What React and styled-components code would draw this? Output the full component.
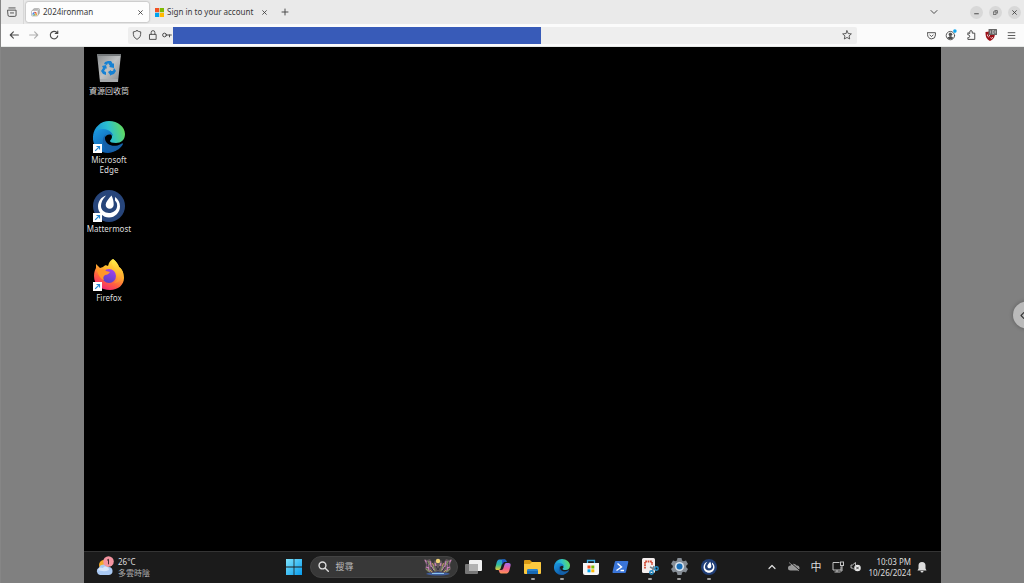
import React from "react";
import styled, { createGlobalStyle } from "styled-components";

const GlobalStyle = createGlobalStyle`
  *, *::before, *::after { box-sizing: border-box; }
  html, body { margin: 0; padding: 0; }
  body { font-family: "Noto Sans", "Noto Sans CJK TC", sans-serif; font-size: 8px; color: #383838; overflow: hidden; }
  button, input { font: inherit; color: inherit; border: 0; padding: 0; margin: 0; background: none; }
  svg { display: block; flex: none; }
`;

/* ---------- Browser chrome ---------- */

const Window = styled.div`
  display: flex;
  flex-direction: column;
  min-height: 100vh;
  border-left: 1px solid #868686;
`;

const TabStrip = styled.header`
  display: flex;
  align-items: center;
  height: 24px;
  background: #eaeaea;
`;

const IconButton = styled.button`
  display: flex;
  align-items: center;
  justify-content: center;
  flex: none;
  width: ${(p) => p.$w || 20}px;
  height: 20px;
  color: ${(p) => p.$color || "#4c4c4c"};
`;

const Divider = styled.span`
  width: 1px;
  height: 24px;
  margin-right: 2px;
  background: #d8d8d8;
`;

const Tabs = styled.div`
  display: flex;
  gap: 1px;
`;

const Tab = styled.div`
  display: flex;
  align-items: center;
  width: 123px;
  height: 20px;
  padding: 0 4px 0 5px;
  gap: 3px;
  border-radius: 2px;
  background: ${(p) => (p.$active ? "#fdfdfd" : "transparent")};
  box-shadow: ${(p) => (p.$active ? "0 0 2px rgba(0, 0, 0, 0.45)" : "none")};
`;

const TabTitle = styled.span`
  flex: 1;
  line-height: 12px;
  white-space: nowrap;
`;

const CloseButton = styled.button`
  display: flex;
  align-items: center;
  justify-content: center;
  width: 10px;
  height: 12px;
`;

const Spacer = styled.span`
  flex: 1;
`;

const WindowControls = styled.div`
  display: flex;
  gap: 6px;
  padding: 0 3px 0 26px;
`;

const RoundButton = styled.button`
  display: flex;
  align-items: center;
  justify-content: center;
  width: 13px;
  height: 13px;
  border-radius: 50%;
  background: #d8d8d8;
`;

const Toolbar = styled.nav`
  display: flex;
  align-items: center;
  height: 23px;
  padding-left: 3px;
  background: #fbfbfb;
  border-bottom: 1px solid #e6e9e7;
`;

const AddressBar = styled.div`
  display: flex;
  align-items: center;
  flex: 1;
  height: 17px;
  margin-left: 64px;
  padding-left: 1px;
  border-radius: 2px;
  background: #eeeeee;
`;

const AddressInput = styled.input`
  width: 368px;
  height: 17px;
  background: #385bb8;
  color: #fff;
`;

const ToolbarActions = styled.div`
  display: flex;
  padding: 0 3px 0 64px;
`;

/* ---------- Remote session ---------- */

const Session = styled.main`
  position: relative;
  display: flex;
  flex: 1;
  padding: 0 83px;
  overflow: hidden;
  background: #808080;
`;

const DrawerHandle = styled.button`
  position: absolute;
  top: 50%;
  right: -16px;
  display: flex;
  align-items: center;
  width: 27px;
  height: 27px;
  padding-left: 7px;
  border-radius: 50%;
  transform: translateY(-50%);
  background: #bababa;
  box-shadow: 0 0 4px rgba(0, 0, 0, 0.3);
`;

const Desktop = styled.section`
  display: flex;
  flex-direction: column;
  flex: 1;
  background: #000;
  color: #dedede;
`;

const Shortcuts = styled.div`
  display: flex;
  flex-direction: column;
  flex: 1;
  width: 50px;
`;

const Shortcut = styled.button`
  display: flex;
  flex-direction: column;
  align-items: center;
  height: 69px;
  padding-top: 4px;
  line-height: 10px;
`;

const ShortcutArt = styled.span`
  position: relative;
  display: flex;
  align-items: center;
  justify-content: center;
  width: 34px;
  height: 34px;
  margin-bottom: 1px;
`;

const ShortcutArrow = styled.span`
  position: absolute;
  left: 1px;
  bottom: 1px;
`;

const Taskbar = styled.footer`
  display: grid;
  grid-template-columns: 195fr auto 217fr;
  align-items: center;
  height: 32px;
  padding-bottom: 2px;
  background: #1b1b1b;
  border-top: 1px solid #343434;
`;

const Weather = styled.button`
  display: flex;
  align-items: center;
  justify-self: start;
  gap: 3px;
  padding-left: 11px;
  line-height: 11px;
  text-align: left;
`;

const Muted = styled.span`
  display: block;
  color: #b0b0b0;
`;

const Pinned = styled.div`
  display: flex;
  align-items: center;
`;

const SearchBox = styled.label`
  display: flex;
  align-items: center;
  width: 148px;
  height: 22px;
  margin: 0 1px;
  padding: 0 4px 0 7px;
  gap: 6px;
  border: 1px solid #434343;
  border-radius: 11px;
  background: #383838;
`;

const SearchInput = styled.input`
  flex: 1;
  min-width: 0;
  font-size: 9px;
  &::placeholder { color: #bcbcbc; opacity: 1; }
`;

const Apps = styled.div`
  display: flex;
  width: 264px;
`;

const AppButton = styled.button`
  position: relative;
  display: flex;
  align-items: center;
  justify-content: center;
  flex: ${(p) => (p.$fixed ? "none" : 1)};
  width: 30px;
  height: 28px;
  &::after {
    content: "";
    position: absolute;
    bottom: 1px;
    width: 4px;
    height: 2px;
    border-radius: 1px;
    background: ${(p) => (p.$running ? "#a0a0a0" : "transparent")};
  }
`;

const Tray = styled.div`
  display: flex;
  align-items: center;
  justify-self: end;
  padding-right: 8px;
`;

const TrayButton = styled.button`
  display: flex;
  align-items: center;
  justify-content: center;
  width: ${(p) => p.$w || 22}px;
  height: 22px;
  font-size: 11px;
  line-height: 22px;
`;

const Clock = styled.time`
  width: 50px;
  line-height: 11px;
  text-align: right;
  white-space: nowrap;
`;

/* ---------- Icons ---------- */

const Line = ({ size = 10, box = 16, w = 1.5, children, ...rest }) => (
  <svg width={size} height={size} viewBox={`0 0 ${box} ${box}`} fill="none" stroke="currentColor"
    strokeWidth={w} strokeLinecap="round" strokeLinejoin="round" aria-hidden="true" {...rest}>
    {children}
  </svg>
);

const Cross = ({ size = 5 }) => (
  <Line size={size} w={2.6}><path d="M2 2l12 12M14 2L2 14" /></Line>
);

const MicrosoftLogo = () => (
  <svg width="9" height="9" viewBox="0 0 9 9" aria-hidden="true">
    <path fill="#f25022" d="M0 0h4.2v4.2H0z" />
    <path fill="#7fba00" d="M4.8 0H9v4.2H4.8z" />
    <path fill="#00a4ef" d="M0 4.8h4.2V9H0z" />
    <path fill="#ffb900" d="M4.8 4.8H9V9H4.8z" />
  </svg>
);

const SessionFavicon = () => (
  <svg width="9" height="9" viewBox="0 0 18 18" aria-hidden="true">
    <rect x="5" y="1" width="12" height="11" rx="2" fill="#ddd" stroke="#888" />
    <rect x="3" y="3" width="12" height="11" rx="2" fill="#eee" stroke="#888" />
    <rect x="1" y="5" width="13" height="11" rx="2" fill="#fff" stroke="#888" />
    <path d="M3 14a5 5 0 014-6v4z" fill="#4b86e8" />
    <path d="M6 8a5 5 0 016 3H8z" fill="#dd5144" />
    <path d="M8 11h4v4H9z" fill="#e9a43b" />
    <path d="M3 15l4-3 2 3z" fill="#4ba05c" />
  </svg>
);

const EdgeLogo = ({ size, id }) => (
  <svg width={size} height={size} viewBox="0 0 32 32" aria-hidden="true">
    <defs>
      <linearGradient id={`${id}a`} x1="0" y1="0.5" x2="1" y2="0.3">
        <stop offset="0" stopColor="#168edb" />
        <stop offset="0.5" stopColor="#2cc0cf" />
        <stop offset="1" stopColor="#66dd55" />
      </linearGradient>
      <linearGradient id={`${id}b`} x1="0" y1="0" x2="0.7" y2="1">
        <stop offset="0" stopColor="#1d9ce4" />
        <stop offset="1" stopColor="#0b55a5" />
      </linearGradient>
    </defs>
    <path fill={`url(#${id}a)`} d="M0 15C1 6 8 0 16 0c9 0 16 6 16 13 0 6-4 9-9 9-4 0-6-1-6-2 0-1 2-2 2-4 0-4-5-7-10-6-5 0-8 2-9 5z" />
    <path fill={`url(#${id}b)`} d="M0 15c1-4 5-7 10-7 6 0 10 4 10 7-3-3-8-1-9 3-1 7 5 12 12 11-3 2-5 3-8 3C6 32-1 25 0 15z" />
    <path fill="#1560a8" d="M13 13c-6 5-3 16 6 18 5-1 9-4 11-8 0-1-1-1-2 0-7 4-15 1-16-5 0-2 0-3 1-5z" />
  </svg>
);

const MattermostLogo = ({ size, light }) => (
  <svg width={size} height={size} viewBox="0 0 32 32" aria-hidden="true">
    <circle cx="16" cy="16" r="16" fill={light ? "#213f78" : "#27457a"} />
    <path fill="#fff" d="M13 5.5C8 7 5 11.5 5 16.5 5 22.500 10 27.500 16 27.500S27 22.500 27 16.500c0-4-2-7.500-5-9.500v3.500c2 2 2.500 4 2 6.500-.6 3.500-4 6-8 6-4.500 0-8-3-8-7 0-3.500 1.500-7 5-10.500z" />
    <path fill="#fff" d="M18.500 5.500c1.500 3 2.200 6 2.200 9 0 2.500-1.700 4.200-4 4.200s-4.200-1.700-4-4.200c.2-2.500 2.600-5.500 5.800-9z" />
  </svg>
);

const FirefoxLogo = () => (
  <svg width="32" height="32" viewBox="0 0 32 32" aria-hidden="true">
    <defs>
      <linearGradient id="foxBody" x1="0.8" y1="0" x2="0.3" y2="1">
        <stop offset="0" stopColor="#fff04a" />
        <stop offset="0.4" stopColor="#ffb62c" />
        <stop offset="0.7" stopColor="#ff6040" />
        <stop offset="1" stopColor="#f32177" />
      </linearGradient>
      <linearGradient id="foxTail" x1="0.5" y1="0" x2="0.5" y2="1">
        <stop offset="0" stopColor="#fff04a" />
        <stop offset="0.5" stopColor="#ffc233" />
        <stop offset="1" stopColor="#ff8a35" />
      </linearGradient>
      <linearGradient id="foxGlobe" x1="0.7" y1="0" x2="0.3" y2="1">
        <stop offset="0" stopColor="#a442ee" />
        <stop offset="1" stopColor="#5440c4" />
      </linearGradient>
    </defs>
    <path fill="url(#foxBody)" d="M20 0c3 2 5 5 6 8 4 3 5 7 5 11 0 7-6 12-14 12C8 31 1 26 1 17c0-4 1-6 2-8V5l4 4 3-1c2-2 3-2 5-1l1-3c1-2 2-3 4-4z" />
    <circle cx="16" cy="17" r="7" fill="url(#foxGlobe)" />
    <path fill="#ff9628" d="M3 9l4 2c3-1 5-1 6 1l4 1c-1 2-3 3-5 3-2 2-2 3-1 5-4-1-6-6-8-12z" />
    <path fill="url(#foxTail)" d="M20 0c-3 5 1 8 4 12 3 5 1 10-3 12 5 0 9-4 9-9 0-3-2-6-4-7-1-3-3-6-6-8z" />
  </svg>
);

const RecycleBin = () => (
  <svg width="26" height="30" viewBox="0 0 26 30" aria-hidden="true">
    <defs>
      <linearGradient id="bin" x1="0" y1="0" x2="1" y2="1">
        <stop offset="0" stopColor="#888c8e" />
        <stop offset="0.5" stopColor="#bfc1c2" />
        <stop offset="1" stopColor="#85898c" />
      </linearGradient>
    </defs>
    <path fill="url(#bin)" d="M1 1h24l-3 28H4z" />
    <path fill="#74787a" d="M1 1h24v2H1z" />
    <path fill="#a7aaac" d="M4 26h18v3H4z" />
    <g fill="#1681d3">
      <path d="M9 9l3-1h3l2 3 1-1v5l-5-1 1-1-2-3-1 2-3-1z" />
      <path d="M6 13l4-1 1 4-1-1-2 3 2 1v3l-3-1-2-3 2-3z" />
      <path d="M12 19l3-2v1h2l1-3 2 3-2 3-3 1v1z" />
    </g>
  </svg>
);

const LinkArrow = () => (
  <svg width="9" height="9" viewBox="0 0 9 9" aria-hidden="true">
    <path fill="#fff" d="M0 0h9v9H0z" />
    <path fill="none" stroke="#2187d5" strokeWidth="1.2" d="M2.200 6.800L6.200 2.800M3.500 2.500h3v3" />
  </svg>
);

const WeatherIcon = () => (
  <svg width="20" height="22" viewBox="0 0 20 22" aria-hidden="true">
    <circle cx="9" cy="9" r="5" fill="#f3a928" />
    <path fill="#a9c9f3" d="M5 19a4 4 0 01-1-7.500A5 5 0 0113 11a4 4 0 011 8z" />
    <path fill="#d7e6fa" d="M3 14c1-3 3-3 5-2 2-3 6-1 6 2-4 2-8 1-11 0z" />
    <circle cx="13.500" cy="5.500" r="5.300" fill="#f494a0" />
    <path fill="none" stroke="#412a30" d="M12 4.300l1.500-1v5" />
  </svg>
);

const WindowsLogo = () => (
  <svg width="16" height="16" viewBox="0 0 16 16" aria-hidden="true">
    <defs>
      <linearGradient id="win" gradientUnits="userSpaceOnUse" x1="0" y1="0" x2="16" y2="16">
        <stop offset="0" stopColor="#7ee3fc" />
        <stop offset="1" stopColor="#079ced" />
      </linearGradient>
    </defs>
    <path fill="url(#win)" d="M0 0h7.600v7.600H0zM8.400 0H16v7.600H8.400zM0 8.400h7.600V16H0zM8.400 8.400H16V16H8.400z" />
  </svg>
);

const Butterflies = () => (
  <svg width="30" height="18" viewBox="0 0 30 18" aria-hidden="true">
    <path fill="#3e5c9c" d="M3 16c4-3 20-3 24 0-6 2-18 2-24 0z" />
    <path fill="#8cc4ee" d="M9 15h12v1H9z" />
    <path fill="#665a5e" d="M1 1l3 1 3-1 3 5 2-4 3 4 3-4 2 4 3-5 3 1 3-1-2 6 1 4-3 3-5 1-5-2-5 2-5-1-3-3 1-4z" />
    <path fill="none" stroke="#c682b8" strokeWidth="1.200" d="M2 2l3 5 1 6M28 2l-3 5-1 6M7 3l1 5 3 4M23 3l-1 5-3 4M3 9l3 1M27 9l-3 1M12 5l1 3M18 5l-1 3" />
    <path fill="none" stroke="#87a35f" d="M5 3l2 4M25 3l-2 4M10 8l2 5M20 8l-2 5M3 11l4 3M27 11l-4 3" />
    <path fill="none" stroke="#292a35" strokeWidth="0.800" d="M8 9l3 5M22 9l-3 5M13 8l2 4 2-4M4 4l1 5M26 4l-1 5" />
    <path fill="none" stroke="#ddb05b" strokeWidth="0.800" d="M9 5l2 3M21 5l-2 3M7 12l2 2M23 12l-2 2" />
    <circle cx="15" cy="3" r="2.200" fill="#f5d679" />
  </svg>
);

const TaskView = () => (
  <svg width="18" height="16" viewBox="0 0 18 16" aria-hidden="true">
    <rect x="4" y="1" width="13" height="11" rx="1" fill="#f1f1f1" />
    <rect x="0" y="5" width="13" height="10" rx="1" fill="#777" />
    <path fill="#b2b2b2" d="M4 5h9v7H4z" />
  </svg>
);

const Copilot = () => (
  <svg width="16" height="15" viewBox="0 0 18 16" aria-hidden="true">
    <defs>
      <linearGradient id="copA" x1="0" y1="0" x2="0" y2="1">
        <stop offset="0" stopColor="#2792e7" />
        <stop offset="0.500" stopColor="#31bd9d" />
        <stop offset="1" stopColor="#e9cf35" />
      </linearGradient>
      <linearGradient id="copB" x1="0.500" y1="0" x2="0.400" y2="1">
        <stop offset="0" stopColor="#a56df0" />
        <stop offset="0.500" stopColor="#ef5d91" />
        <stop offset="1" stopColor="#ff9454" />
      </linearGradient>
    </defs>
    <path fill="url(#copA)" d="M5 0h6c1 0 2 1 2 3H10C8 3 8 5 7 8s-1 4-3 4H2c-2 0-2-2-1-5l1-4c1-2 1-3 3-3z" />
    <path fill="#1e5bc9" d="M8 0h3c1 0 2 1 2 3h-3L8 6z" />
    <path fill="url(#copB)" d="M13 4h2c3 0 3 2 2 5l-1 4c-1 2-2 3-4 3H7c-2 0-2-2-3-4h3c2 0 2-1 3-4s1-4 3-4z" />
  </svg>
);

const Folder = () => (
  <svg width="17" height="16" viewBox="0 0 17 16" aria-hidden="true">
    <path fill="#d99a15" d="M0 2q0-1 1-1h5l2 2h8q1 0 1 1v6H0z" />
    <path fill="#fbc93f" d="M0 5h6l2-2h8q1 0 1 1v10q0 1-1 1H1q-1 0-1-1z" />
    <path fill="#1769b4" d="M3 15v-3q0-2 2-2h7q2 0 2 2v3z" />
    <path fill="#2a84cf" d="M5 10h7q2 0 2 2H3q0-2 2-2z" />
  </svg>
);

const Store = () => (
  <svg width="16" height="16" viewBox="0 0 16 16" aria-hidden="true">
    <path fill="none" stroke="#3baee7" strokeWidth="1.300" d="M4.500 5V1.500h7V5" />
    <path fill="#f6f6f6" d="M0 4h16v10q0 2-2 2H2q-2 0-2-2z" />
    <path fill="#f25022" d="M4.500 6.500h3v3h-3z" />
    <path fill="#7fba00" d="M8.300 6.500h3v3h-3z" />
    <path fill="#00a4ef" d="M4.500 10.300h3v3h-3z" />
    <path fill="#ffb900" d="M8.300 10.300h3v3h-3z" />
  </svg>
);

const PowerShell = () => (
  <svg width="17" height="14" viewBox="0 0 17 14" aria-hidden="true">
    <path fill="#3a75d8" d="M4 1h11.500q1 0 .8 1l-2.300 10q-.2 1-1.200 1H1.300q-1 0-.8-1L2.800 2Q3 1 4 1z" />
    <path fill="none" stroke="#fff" strokeWidth="1.400" d="M5.500 3.500l4 3.500-5 3.500M8.500 10.500h3.500" />
  </svg>
);

const Snipping = () => (
  <svg width="18" height="17" viewBox="0 0 18 17" aria-hidden="true">
    <rect x="1" y="0" width="13" height="15" rx="1.500" fill="#f4eeee" />
    <path fill="none" stroke="#d24c37" strokeWidth="1.800" strokeDasharray="1.800 0.600" d="M4 10.500V3.500h7V7" />
    <path stroke="#77838c" strokeWidth="1.500" d="M9 9l6 3M13 8l-2 6" />
    <g fill="none" stroke="#238ec9" strokeWidth="1.500">
      <circle cx="15.500" cy="10.500" r="1.700" />
      <circle cx="10.500" cy="14.500" r="1.700" />
    </g>
  </svg>
);

const Gear = () => (
  <svg width="17" height="17" viewBox="0 0 17 17" aria-hidden="true">
    <path fill="#858c94" d="M6.500 0h4l.6 2.400 1.500.9 2.400-.7 2 3.400-1.800 1.700v1.600L17 11l-2 3.400-2.400-.7-1.500.9-.6 2.400h-4l-.6-2.400-1.500-.9-2.400.7L0 11l1.800-1.700V7.700L0 6l2-3.400 2.400.7 1.500-.9z" />
    <circle cx="8.500" cy="8.500" r="4.600" fill="#d9e3ec" />
    <circle cx="8.500" cy="8.500" r="3" fill="#176db7" />
  </svg>
);

const CloudOff = () => (
  <svg width="12" height="10" viewBox="0 0 24 20" aria-hidden="true">
    <path fill="#999" d="M5 17a5 5 0 010-10 7 7 0 0112 0 5 5 0 012 10z" />
    <path stroke="#1b1b1b" strokeWidth="2" d="M4 0l19 17" />
    <path stroke="#aaa" strokeWidth="1.500" d="M2 1l20 17" />
  </svg>
);

const Network = () => (
  <svg width="12" height="12" viewBox="0 0 24 24" fill="none" stroke="#c4c4c4" strokeWidth="2" aria-hidden="true">
    <path d="M15 3H2v15h16v-7M10 18v4M5 22h12M20 9v11h-3" />
    <rect x="17" y="2" width="6" height="7" />
  </svg>
);

const Muting = () => (
  <svg width="11" height="11" viewBox="0 0 22 22" aria-hidden="true">
    <path fill="none" stroke="#ccc" strokeWidth="1.700" d="M2 8h3l6-5v6M2 8v6h3l3 3" />
    <circle cx="15" cy="14" r="6.500" fill="#e8e8e8" />
    <path stroke="#222" strokeWidth="1.600" d="M12.500 11.500l5 5M17.500 11.500l-5 5" />
  </svg>
);

const Bell = () => (
  <svg width="10" height="12" viewBox="0 0 20 24" aria-hidden="true">
    <path fill="#dcdcdc" d="M10 2a7 7 0 00-7 7v6l-2 4h18l-2-4V9a7 7 0 00-7-7zM7 20a3 3 0 006 0z" />
  </svg>
);

const Account = () => (
  <Line size={12} box={20} w={1.5}>
    <circle cx="9" cy="11" r="7" />
    <circle cx="9" cy="9" r="2.300" fill="currentColor" />
    <path fill="currentColor" d="M5 15q4-5 8 0-4 3-8 0z" />
    <circle cx="16.500" cy="3.500" r="3" fill="#12a7ee" stroke="none" />
  </Line>
);

const Blocker = () => (
  <svg width="12" height="13" viewBox="0 0 24 26" aria-hidden="true">
    <path fill="#9c1018" d="M1 6q5 0 9-2 4 2 10 2c0 10-2 14-10 18C3 20 1 16 1 6z" />
    <path fill="none" stroke="#fff" strokeWidth="1.500" d="M5 11v3q2 3 4 0v-2M11 17a2 2 0 104-1" />
    <rect x="7" y="0" width="17" height="12" rx="1" fill="#666" />
    <path fill="none" stroke="#ccc" strokeWidth="1.300" d="M11 3v6M15 3v6h3V3zM21 3v6" />
  </svg>
);

/* ---------- Data ---------- */

const shortcuts = [
  { label: "資源回收筒", art: <RecycleBin /> },
  { label: "Microsoft Edge", art: <EdgeLogo size={32} id="deskEdge" />, link: true },
  { label: "Mattermost", art: <MattermostLogo size={32} />, link: true },
  { label: "Firefox", art: <FirefoxLogo />, link: true },
];

const apps = [
  { name: "Task view", icon: <TaskView /> },
  { name: "Copilot", icon: <Copilot /> },
  { name: "File Explorer", icon: <Folder />, running: true },
  { name: "Microsoft Edge", icon: <EdgeLogo size={16} id="barEdge" />, running: true },
  { name: "Microsoft Store", icon: <Store /> },
  { name: "PowerShell", icon: <PowerShell /> },
  { name: "Snipping Tool", icon: <Snipping />, running: true },
  { name: "Settings", icon: <Gear />, running: true },
  { name: "Mattermost", icon: <MattermostLogo size={16} light />, running: true },
];

export default function App() {
  return (
    <Window>
      <GlobalStyle />
      <TabStrip>
        <IconButton $w={22} aria-label="Firefox View">
          <Line w={1.5}><path d="M3 1.500h10M1.500 5h13v8q0 2-2 2h-9q-2 0-2-2zM5.500 9.500h5" /></Line>
        </IconButton>
        <Divider />
        <Tabs>
          <Tab $active>
            <SessionFavicon />
            <TabTitle>2024ironman</TabTitle>
            <CloseButton aria-label="Close tab"><Cross /></CloseButton>
          </Tab>
          <Tab>
            <MicrosoftLogo />
            <TabTitle>Sign in to your account</TabTitle>
            <CloseButton aria-label="Close tab"><Cross /></CloseButton>
          </Tab>
        </Tabs>
        <IconButton $w={24} aria-label="New tab">
          <Line size={8} w={2}><path d="M8 2v12M2 8h12" /></Line>
        </IconButton>
        <Spacer />
        <IconButton aria-label="List all tabs">
          <Line size={8} w={2}><path d="M2 5l6 6 6-6" /></Line>
        </IconButton>
        <WindowControls>
          <RoundButton aria-label="Minimize"><Line size={5} w={2.8}><path d="M2 12h12" /></Line></RoundButton>
          <RoundButton aria-label="Restore"><Line size={5} w={2.2}><path d="M2 6h8v8H2zM6 2h8v8" /></Line></RoundButton>
          <RoundButton aria-label="Close"><Cross /></RoundButton>
        </WindowControls>
      </TabStrip>

      <Toolbar>
        <IconButton aria-label="Back"><Line w={1.8}><path d="M15 8H2M7 3L2 8l5 5" /></Line></IconButton>
        <IconButton $color="#b0b0b0" aria-label="Forward"><Line w={1.8}><path d="M1 8h13M9 3l5 5-5 5" /></Line></IconButton>
        <IconButton aria-label="Reload"><Line w={1.8}><path d="M14 9.500A6 6 0 1112.500 4L14 5.500M14 1.500v4h-4" /></Line></IconButton>
        <AddressBar>
          <IconButton $w={16} aria-label="Tracking protection">
            <Line w={1.5}><path d="M8 1q3 2 6 2c0 7-1 9-6 12C3 12 2 10 2 3q3 0 6-2z" /></Line>
          </IconButton>
          <IconButton $w={15} aria-label="Connection security">
            <Line w={1.5}><path d="M3 7h10v8H3zM5 7V4a3 3 0 016 0v3" /></Line>
          </IconButton>
          <IconButton $w={13} aria-label="Saved logins">
            <Line w={1.6}><circle cx="4" cy="8" r="3" /><path d="M7 8h8M12 8v3" /></Line>
          </IconButton>
          <AddressInput type="text" aria-label="Address" />
          <Spacer />
          <IconButton aria-label="Bookmark this page">
            <Line w={1.4}><path d="M8 1.200l2 4.500 5 .5-3.700 3.200 1 5L8 11.900l-4.300 2.500 1-5L1 6.200l5-.5z" /></Line>
          </IconButton>
        </AddressBar>
        <ToolbarActions>
          <IconButton aria-label="Save to Pocket">
            <Line size={9} w={1.7}><path d="M1 3h14v4a7 7 0 01-14 0zM5 7l3 3 3-3" /></Line>
          </IconButton>
          <IconButton aria-label="Account"><Account /></IconButton>
          <IconButton aria-label="Extensions">
            <Line w={1.6}><path d="M6 5V3a2 2 0 014 0v2h4v10H3v-3h1a2 2 0 000-4H3V5z" /></Line>
          </IconButton>
          <IconButton aria-label="Content blocker"><Blocker /></IconButton>
          <IconButton aria-label="Menu"><Line size={9} w={1.6}><path d="M2 3h12M2 8h12M2 13h12" /></Line></IconButton>
        </ToolbarActions>
      </Toolbar>

      <Session>
        <Desktop>
          <Shortcuts>
            {shortcuts.map((s) => (
              <Shortcut key={s.label}>
                <ShortcutArt>
                  {s.art}
                  {s.link && <ShortcutArrow><LinkArrow /></ShortcutArrow>}
                </ShortcutArt>
                {s.label}
              </Shortcut>
            ))}
          </Shortcuts>
          <Taskbar>
            <Weather>
              <WeatherIcon />
              <span>26°C<Muted>多雲時陰</Muted></span>
            </Weather>
            <Pinned>
              <AppButton $fixed aria-label="Start"><WindowsLogo /></AppButton>
              <SearchBox>
                <Line size={11} w={2}><circle cx="6.500" cy="6.500" r="5" /><path d="M10.500 10.500L15 15" /></Line>
                <SearchInput type="search" placeholder="搜尋" aria-label="搜尋" />
                <Butterflies />
              </SearchBox>
              <Apps>
                {apps.map((a) => (
                  <AppButton key={a.name} $running={a.running} aria-label={a.name}>{a.icon}</AppButton>
                ))}
              </Apps>
            </Pinned>
            <Tray>
              <TrayButton aria-label="Show hidden icons"><Line size={8} w={2.4}><path d="M2 11l6-6 6 6" /></Line></TrayButton>
              <TrayButton aria-label="OneDrive"><CloudOff /></TrayButton>
              <TrayButton>中</TrayButton>
              <TrayButton aria-label="Network"><Network /></TrayButton>
              <TrayButton $w={12} aria-label="Volume"><Muting /></TrayButton>
              <Clock dateTime="2024-10-26T22:03">10:03 PM<br />10/26/2024</Clock>
              <TrayButton aria-label="Notifications"><Bell /></TrayButton>
            </Tray>
          </Taskbar>
        </Desktop>
        <DrawerHandle aria-label="Open panel">
          <Line size={8} w={2.2}><path d="M8 2L2 8l6 6 6-6z" /></Line>
        </DrawerHandle>
      </Session>
    </Window>
  );
}
